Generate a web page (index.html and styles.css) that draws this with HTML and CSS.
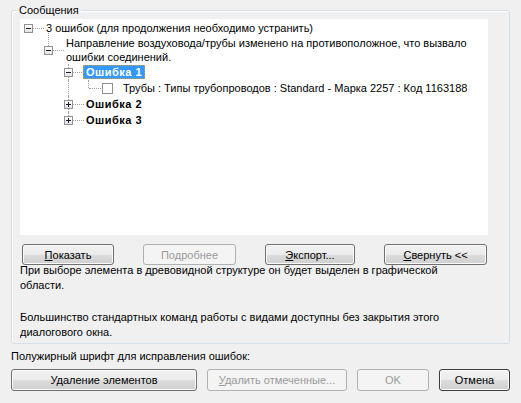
FILE: index.html
```html
<!DOCTYPE html>
<html lang="ru">
<head>
  <meta charset="UTF-8">
  <meta name="viewport" content="width=device-width, initial-scale=1.0">
  <title>Сообщения</title>
  <link rel="stylesheet" href="styles.css">
</head>
<body>
  <div class="dialog">
    <fieldset class="group">
      <legend>Сообщения</legend>

      <div class="tree">
        <div class="row">
          <span class="exp-cell"><i class="exp"></i></span>
          <span class="label">3 ошибок (для продолжения необходимо устранить)</span>
        </div>
        <div class="row two-lines">
          <span class="cell"></span>
          <span class="exp-cell up"><i class="exp"></i></span>
          <span class="label">Направление воздуховода/трубы изменено на противоположное, что вызвало<br>ошибки соединений.</span>
        </div>
        <div class="row">
          <span class="cell"></span><span class="cell"></span>
          <span class="exp-cell through"><i class="exp"></i></span>
          <span class="label bold selected">Ошибка 1</span>
        </div>
        <div class="row">
          <span class="cell"></span><span class="cell"></span><span class="cell v"></span>
          <span class="exp-cell leaf up"></span>
          <i class="check"></i>
          <span class="label leaf-label">Трубы : Типы трубопроводов : Standard - Марка 2257 : Код 1163188</span>
        </div>
        <div class="row">
          <span class="cell"></span><span class="cell"></span>
          <span class="exp-cell through"><i class="exp plus"></i></span>
          <span class="label bold">Ошибка 2</span>
        </div>
        <div class="row">
          <span class="cell"></span><span class="cell"></span>
          <span class="exp-cell up"><i class="exp plus"></i></span>
          <span class="label bold">Ошибка 3</span>
        </div>
      </div>

      <div class="actions">
        <button class="btn w-show"><u>П</u>оказать</button>
        <button class="btn w-more" disabled>По<u>д</u>робнее</button>
        <button class="btn w-export"><u>Э</u>кспорт...</button>
        <button class="btn w-fold"><u>С</u>вернуть &lt;&lt;</button>
      </div>

      <p class="note">При выборе элемента в древовидной структуре он будет выделен в графической<br>области.</p>
      <p class="note second">Большинство стандартных команд работы с видами доступны без закрытия этого<br>диалогового окна.</p>
    </fieldset>

    <p class="hint">Полужирный шрифт для исправления ошибок:</p>

    <div class="footer">
      <button class="btn w-delete">Удаление элементов</button>
      <button class="btn w-marked" disabled><u>У</u>далить отмеченные...</button>
      <button class="btn w-ok" disabled>OK</button>
      <button class="btn w-cancel default">Отмена</button>
    </div>
  </div>
</body>
</html>
```

FILE: styles.css
```css
/* диалог "Сообщения" в стиле Windows 7 */
* {
  box-sizing: border-box;
}
body {
  margin: 0;
  background: #f0f0f0;
  font-family: "Liberation Sans", Arial, sans-serif;
  font-size: 11px;
  color: #000;
}
.dialog {
  padding: 3px 11px 0 11px;
}

/* рамка группы */
.group {
  margin: 0;
  padding: 2px 0 3px 8px;
  border: 1px solid #d5dfe5;
  border-radius: 3px;
  box-shadow: inset 1px 1px 0 #fff;
  min-inline-size: 0;
}
.group legend {
  margin-left: -3px;
  padding: 0 2px;
  line-height: 14px;
}

/* дерево */
.tree {
  width: 468px;
  height: 216px;
  padding-top: 1px;
  background: #fff;
}
.row {
  display: flex;
  height: 16px;
  line-height: 16px;
  white-space: nowrap;
}
.row.two-lines {
  height: 28px;
  line-height: 14px;
}
.cell,
.exp-cell {
  position: relative;
  flex: none;
  width: 20px;
}
.exp-cell {
  width: 26px;
}
.exp-cell.leaf {
  width: 22px;
}
/* вертикальные пунктирные линии */
.cell.v::before,
.exp-cell.up::before,
.exp-cell.through::before {
  content: '';
  position: absolute;
  left: 8px;
  top: 0;
  bottom: 0;
  border-left: 1px dotted #a0a0a0;
}
.row.two-lines .exp-cell.up::before {
  top: -3px;
}
.exp-cell.up::before {
  bottom: 50%;
}
/* горизонтальная линия к подписи */
.exp-cell::after {
  content: '';
  position: absolute;
  left: 13px;
  width: 11px;
  top: 50%;
  border-top: 1px dotted #a0a0a0;
}
.exp-cell.leaf::after {
  left: 9px;
  width: 12px;
}
.exp {
  position: absolute;
  z-index: 1;
  left: 4px;
  top: 50%;
  margin-top: -4px;
  width: 9px;
  height: 9px;
  border: 1px solid #919191;
  background: linear-gradient(#ffffff, #e4e4e4);
}
.exp::before,
.exp.plus::after {
  content: '';
  position: absolute;
  left: 1px;
  top: 3px;
  width: 5px;
  height: 1px;
  background: #1a1a3a;
}
.exp.plus::after {
  left: 3px;
  top: 1px;
  width: 1px;
  height: 5px;
}
.check {
  flex: none;
  align-self: center;
  width: 11px;
  height: 11px;
  border: 1px solid #8f8f8f;
  background: #fff;
}
.label.leaf-label {
  margin-left: 10px;
}
.bold {
  font-weight: bold;
  letter-spacing: 0.5px;
}
.selected {
  align-self: center;
  height: 14px;
  line-height: 12px;
  margin-left: -3px;
  padding: 0 2px;
  background: #3399ff;
  color: #fff;
  border: 1px dotted #e0953f;
}

/* кнопки */
.btn {
  height: 21px;
  padding: 0;
  font: inherit;
  color: #000;
  border: 1px solid #707070;
  border-radius: 3px;
  background: linear-gradient(#f2f2f2 0%, #ebebeb 50%, #dddddd 50%, #cfcfcf 100%);
  box-shadow: inset 0 0 0 1px #fbfbfb;
}
.btn:disabled {
  color: #9a9a9a;
  border-color: #adb2b5;
  background: #f4f4f4;
  box-shadow: none;
}
.btn.default {
  border-color: #3c3c3c;
}
.actions {
  display: flex;
  justify-content: space-between;
  width: 468px;
  margin-top: 9px;
  padding: 0 1px 0 2px;
}
.w-show { width: 92px; }
.w-more { width: 93px; }
.w-export { width: 90px; }
.w-fold { width: 103px; }

.note {
  margin: 0;
  line-height: 15px;
}
.actions + .note {
  margin-top: -2px;
}
.note.second {
  margin-top: 17px;
}

.hint {
  margin: 5px 0 0 0;
  line-height: 14px;
}
.footer {
  display: flex;
  gap: 10px;
  margin-top: 6px;
}
.footer .btn {
  height: 22px;
}
.w-delete { width: 186px; }
.w-marked { width: 140px; }
.w-ok { width: 72px; }
.w-cancel { width: 71px; }
```
